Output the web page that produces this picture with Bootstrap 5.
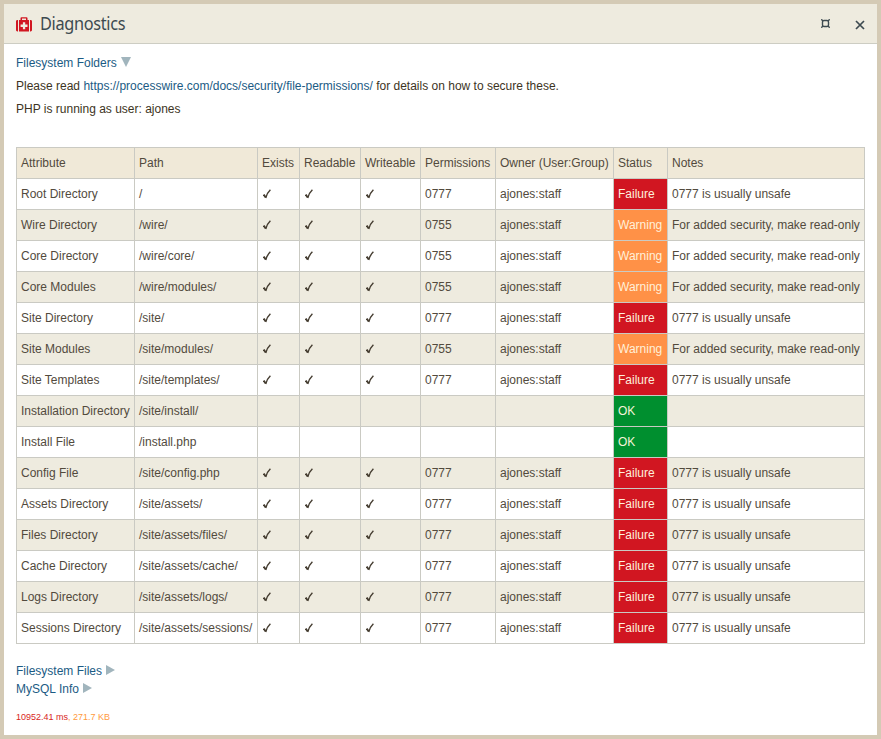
<!DOCTYPE html>
<html lang="en">
<head>
<meta charset="utf-8">
<title>Diagnostics</title>
<meta name="viewport" content="width=device-width, initial-scale=1">
<link href="https://cdn.jsdelivr.net/npm/bootstrap@5.3.0/dist/css/bootstrap.min.css" rel="stylesheet">
<style>
body{font:12px/18px "Liberation Sans",Arial,sans-serif;color:#3d3423;background:#fff}
.panel{height:739px;border:4px solid #d4cab5;overflow:hidden}
.panel-head{height:40px;background:#eeebdf;border-bottom:1px solid #cdcdc3;padding:0 12px}
.kit{margin-top:1px}
.panel-title{font:18px/24px "Noto Sans","Open Sans",sans-serif;color:#3d4a50;margin:-1px 0 0 8px;letter-spacing:-.35px;transform:scaleX(.905);transform-origin:0 50%}
.tool{background:none;border:0;padding:0;line-height:0;margin-top:-1px}
.close-tool{margin:3px 0 0 25px}
.panel-body{padding:10px 12px 0}
.panel a{color:#1b5b84;text-decoration:none}
.tri{fill:#a1b5bd;margin:-3px 0 0 4px}
.line{height:23px}
.checks{width:849px;table-layout:fixed;border-collapse:collapse;margin:24px 0 18px;color:#524a3d}
.checks th,.checks td{height:31px;padding:0 0 0 4px;border:1px solid #cacac3;font-weight:400;white-space:nowrap;vertical-align:middle;text-align:left;line-height:18px}
.checks th{background:#f0e9d8}
.checks tbody tr:nth-child(even){background:#eeebdf}
.checks td.bad{background:#d11621;color:#fdeedd}
.checks td.warn{background:#ff9147;color:#fff0d8}
.checks td.good{background:#008f2f;color:#f3f3d8}
.tick{display:block;margin:-1px 0 0 .5px}
.stats{font-size:9px;line-height:12px;margin-top:13px;color:#ff9a3d}
.stats .ms{color:#d8261c}
</style>
<script src="https://cdn.jsdelivr.net/npm/bootstrap@5.3.0/dist/js/bootstrap.bundle.min.js"></script>
</head>
<body>
<div class="panel">
  <header class="panel-head d-flex align-items-center">
    <svg class="kit" width="16" height="15" viewBox="0 0 16 15" fill="#d11621"><path d="M2 3v11.500h-.6A1.400 1.400 0 0 1 0 13V4.500A1.400 1.400 0 0 1 1.400 3zM14 3v11.500h.6A1.400 1.400 0 0 0 16 13V4.500A1.400 1.400 0 0 0 14.600 3z"/><path fill-rule="evenodd" d="M3 3h1.500V1.200Q4.500.200 5.500.200h5q1 0 1 1V3H13v11.500H3zM6 3h4V1.600H6zM6.900 5.200v2.400H4.600v2.300h2.300v2.400h2.300V9.900h2.300V7.600H9.200V5.200z"/></svg>
    <h1 class="panel-title">Diagnostics</h1>
    <button class="tool ms-auto" aria-label="Pop out"><svg width="9" height="9" viewBox="0 0 9 9" fill="none" stroke="#3d4a50" stroke-width="1.400"><rect x="1.500" y="1.500" width="6" height="6" rx="1.500"/><path d="M.3.300 2 2M8.700.300 7 2M.3 8.700 2 7M8.700 8.700 7 7"/></svg></button>
    <button class="tool close-tool" aria-label="Close"><svg width="10" height="10" viewBox="0 0 10 10" fill="none" stroke="#3d4a50" stroke-width="1.700"><path d="m1 1 8 8M9 1 1 9"/></svg></button>
  </header>
  <main class="panel-body">
    <div class="line"><a href="#">Filesystem Folders<svg class="tri" width="10" height="10" viewBox="0 0 10 10"><path d="M0 0h10L5 10z"/></svg></a></div>
    <div class="line">Please read <a href="#">https://processwire.com/docs/security/file-permissions/</a> for details on how to secure these.</div>
    <div class="line">PHP is running as user: ajones</div>
    <table class="checks">
      <colgroup><col style="width:118px"><col style="width:123px"><col style="width:42px"><col style="width:61px"><col style="width:60px"><col style="width:75px"><col style="width:118px"><col style="width:54px"><col style="width:197px"></colgroup>
      <thead><tr><th>Attribute</th><th>Path</th><th>Exists</th><th>Readable</th><th>Writeable</th><th>Permissions</th><th>Owner (User:Group)</th><th>Status</th><th>Notes</th></tr></thead>
      <tbody id="rows"></tbody>
    </table>
    <div><a href="#">Filesystem Files<svg class="tri" width="9" height="10" viewBox="0 0 9 10"><path d="M0 0v10l9-5z"/></svg></a></div>
    <div><a href="#">MySQL Info<svg class="tri" width="9" height="10" viewBox="0 0 9 10"><path d="M0 0v10l9-5z"/></svg></a></div>
    <div class="stats"><span class="ms">10952.41 ms</span>, 271.7 KB</div>
  </main>
</div>
<script>
const states = {
  F: ['0777', 'bad', 'Failure', '0777 is usually unsafe'],
  W: ['0755', 'warn', 'Warning', 'For added security, make read-only'],
  O: ['', 'good', 'OK', '']
};
const tick = '<svg class="tick" width="8" height="10" viewBox="0 0 8 10" fill="none" stroke="#443c30"><path stroke-width="1.900" d="M.7 5.500 2.700 8.600"/><path stroke-width="1.400" d="M2.700 9Q4 4 7.400.800"/></svg>';
document.getElementById('rows').innerHTML = [
  ['Root Directory', '/', 'F'],
  ['Wire Directory', '/wire/', 'W'],
  ['Core Directory', '/wire/core/', 'W'],
  ['Core Modules', '/wire/modules/', 'W'],
  ['Site Directory', '/site/', 'F'],
  ['Site Modules', '/site/modules/', 'W'],
  ['Site Templates', '/site/templates/', 'F'],
  ['Installation Directory', '/site/install/', 'O'],
  ['Install File', '/install.php', 'O'],
  ['Config File', '/site/config.php', 'F'],
  ['Assets Directory', '/site/assets/', 'F'],
  ['Files Directory', '/site/assets/files/', 'F'],
  ['Cache Directory', '/site/assets/cache/', 'F'],
  ['Logs Directory', '/site/assets/logs/', 'F'],
  ['Sessions Directory', '/site/assets/sessions/', 'F']
].map(([name, path, s]) => {
  const [perm, cls, label, note] = states[s];
  const t = `<td>${perm && tick}</td>`;
  return `<tr><td>${name}</td><td>${path}</td>${t}${t}${t}<td>${perm}</td><td>${perm && 'ajones:staff'}</td><td class="${cls}">${label}</td><td>${note}</td></tr>`;
}).join('');
</script>
</body>
</html>
